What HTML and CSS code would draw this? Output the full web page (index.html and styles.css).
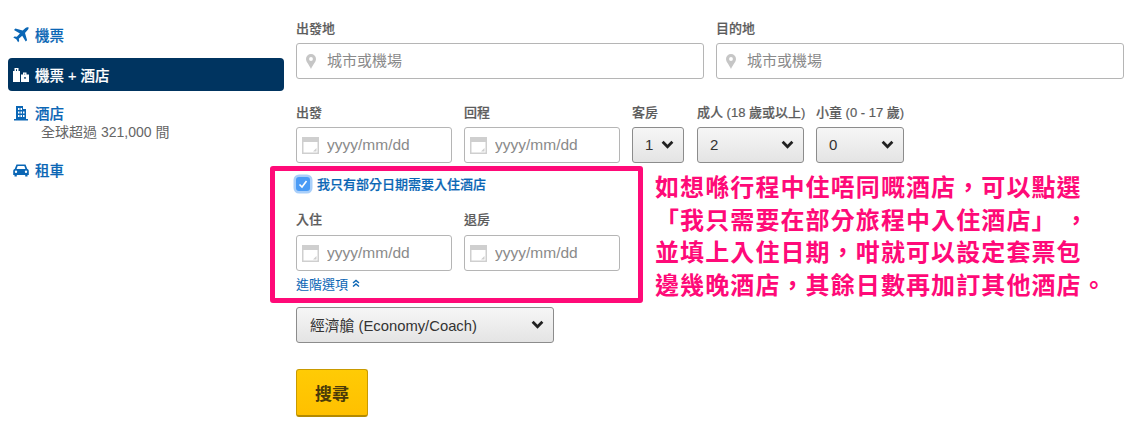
FILE: index.html
```html
<!DOCTYPE html>
<html lang="zh-Hant">
<head>
    <meta charset="UTF-8">
    <title>機票 + 酒店</title>
    <link rel="stylesheet" href="styles.css">
</head>
<body>
    <div class="page">
        <nav class="sidebar">
            <a class="nav-item">
                <svg class="nav-icon" viewBox="0 0 16 16"><path d="M15.6.6c-.8-.7-2.200-.4-3.100.4L9.700 3.600 2.400 1.500 1 2.900l5.900 3.500-3.100 3.400-2.300-.4L.3 10.500l3 1.700 1.800 3.100 1.100-1.200-.4-2.300 3.400-3.100 3.500 5.900 1.400-1.400-2.100-7.300 2.600-2.800c.9-.9 1.200-2.300 1-2.500z"/></svg>
                <span>機票</span>
            </a>
            <a class="nav-item active">
                <svg class="nav-icon" viewBox="0 0 16 16"><path fill-rule="evenodd" d="M0 4h1.500V1h4v3H7v11H0zM3 2.300V4h1V2.300z"/><path fill-rule="evenodd" d="M8 7.500h2V5.500h3.500v2H16V15H8zM11.300 6.700v.8h.9v-.8z"/><rect x="11.300" y="10" width="1.400" height="1.800" fill="#003460"/></svg>
                <span>機票 + 酒店</span>
            </a>
            <a class="nav-item has-sub">
                <svg class="nav-icon" viewBox="0 0 16 16"><path fill-rule="evenodd" d="M3 1h7v3h3v10h2v1.500H1V14h2zM5 3v2h1.500V3zm2.500 0v2H9V3zM5 6.500v2h1.500v-2zm2.500 0v2H9v-2zm2.500 0v2h1.500v-2zM5 10v2h1.500v-2zm2.500 0v2H9v-2zm2.500 0v2h1.500v-2z"/></svg>
                <span>酒店</span>
            </a>
            <div class="nav-sub">全球超過 321,000 間</div>
            <a class="nav-item">
                <svg class="nav-icon" viewBox="0 0 16 16"><path fill-rule="evenodd" d="M3.500 2.500h9L14.300 7c1 .4 1.500 1.200 1.500 2.200V13h-1.300v1.500h-2.300V13H3.800v1.500H1.500V13H.2V9.200C.2 8.200.7 7.400 1.700 7zM4.700 4 3.600 6.900h8.800L11.300 4zM3 8.600a1.200 1.200 0 1 0 0 2.400 1.200 1.200 0 0 0 0-2.400zm10 0a1.200 1.200 0 1 0 0 2.400 1.200 1.200 0 0 0 0-2.400z"/></svg>
                <span>租車</span>
            </a>
        </nav>

        <main class="form">
            <div class="row row-places">
                <label class="field grow">
                    <span class="field-label">出發地</span>
                    <span class="input-wrap">
                        <svg class="pin-icon" viewBox="0 0 12 18"><path fill-rule="evenodd" d="M6 0a6 6 0 0 1 6 6c0 3.500-3.500 6.500-6 12C3.500 12.500 0 9.500 0 6a6 6 0 0 1 6-6zm0 3.700a2.300 2.300 0 1 0 0 4.600 2.300 2.300 0 0 0 0-4.600z"/></svg>
                        <input class="text-input" placeholder="城市或機場">
                    </span>
                </label>
                <label class="field grow">
                    <span class="field-label">目的地</span>
                    <span class="input-wrap">
                        <svg class="pin-icon" viewBox="0 0 12 18"><path fill-rule="evenodd" d="M6 0a6 6 0 0 1 6 6c0 3.500-3.500 6.500-6 12C3.500 12.500 0 9.500 0 6a6 6 0 0 1 6-6zm0 3.700a2.300 2.300 0 1 0 0 4.600 2.300 2.300 0 0 0 0-4.600z"/></svg>
                        <input class="text-input" placeholder="城市或機場">
                    </span>
                </label>
            </div>

            <div class="row row-dates">
                <label class="field date">
                    <span class="field-label">出發</span>
                    <span class="input-wrap">
                        <svg class="cal-icon" viewBox="0 0 17 17"><path fill-rule="evenodd" d="M0 0h17v17H0zM1.500 5v10.500h14V5z"/><path d="M14.500 11v3.500H11z"/></svg>
                        <input class="text-input" placeholder="yyyy/mm/dd">
                    </span>
                </label>
                <label class="field date">
                    <span class="field-label">回程</span>
                    <span class="input-wrap">
                        <svg class="cal-icon" viewBox="0 0 17 17"><path fill-rule="evenodd" d="M0 0h17v17H0zM1.500 5v10.500h14V5z"/><path d="M14.500 11v3.500H11z"/></svg>
                        <input class="text-input" placeholder="yyyy/mm/dd">
                    </span>
                </label>
                <div class="field rooms">
                    <span class="field-label">客房</span>
                    <div class="select-box"><span>1</span><svg class="chevron" viewBox="0 0 12 8"><path d="M1.500 1.500 6 6l4.500-4.500"/></svg></div>
                </div>
                <div class="field adults">
                    <span class="field-label">成人 (18 歲或以上)</span>
                    <div class="select-box"><span>2</span><svg class="chevron" viewBox="0 0 12 8"><path d="M1.500 1.500 6 6l4.500-4.500"/></svg></div>
                </div>
                <div class="field kids">
                    <span class="field-label">小童 (0 - 17 歲)</span>
                    <div class="select-box"><span>0</span><svg class="chevron" viewBox="0 0 12 8"><path d="M1.500 1.500 6 6l4.500-4.500"/></svg></div>
                </div>
            </div>

            <div class="partial-check">
                <span class="checkbox"><svg viewBox="0 0 10 10"><path d="M1.500 5.500 4 8l4.500-6"/></svg></span>
                <span class="check-text">我只有部分日期需要入住酒店</span>
            </div>

            <div class="row row-stay">
                <label class="field date">
                    <span class="field-label">入住</span>
                    <span class="input-wrap">
                        <svg class="cal-icon" viewBox="0 0 17 17"><path fill-rule="evenodd" d="M0 0h17v17H0zM1.500 5v10.500h14V5z"/><path d="M14.500 11v3.500H11z"/></svg>
                        <input class="text-input" placeholder="yyyy/mm/dd">
                    </span>
                </label>
                <label class="field date">
                    <span class="field-label">退房</span>
                    <span class="input-wrap">
                        <svg class="cal-icon" viewBox="0 0 17 17"><path fill-rule="evenodd" d="M0 0h17v17H0zM1.500 5v10.500h14V5z"/><path d="M14.500 11v3.500H11z"/></svg>
                        <input class="text-input" placeholder="yyyy/mm/dd">
                    </span>
                </label>
            </div>

            <a class="advanced">進階選項 <svg viewBox="0 0 8 9"><path d="M1 4 4 1.500 7 4M1 7.500 4 5l3 2.500"/></svg></a>

            <div class="select-box cabin"><span>經濟艙 (Economy/Coach)</span><svg class="chevron" viewBox="0 0 12 8"><path d="M1.500 1.500 6 6l4.500-4.500"/></svg></div>

            <button class="search-btn">搜尋</button>
        </main>
    </div>

    <div class="note-box"></div>
    <p class="note-text">如想喺行程中住唔同嘅酒店，可以點選<br>「我只需要在部分旅程中入住酒店」 ，<br>並填上入住日期，咁就可以設定套票包<br>邊幾晚酒店，其餘日數再加訂其他酒店。</p>
</body>
</html>
```

FILE: styles.css
```css
* {
    box-sizing: border-box;
}

body {
    margin: 0;
    height: 429px;
    overflow: hidden;
    position: relative;
    background-color: white;
    font-family: "Liberation Sans", "Noto Sans CJK TC", sans-serif;
    font-size: 14px;
    color: #333;
}

.page {
    display: flex;
    padding-left: 8px;
}

/* left menu */
.sidebar {
    width: 276px;
    margin-right: 12px;
    padding-top: 24px;
}

.nav-item {
    display: flex;
    align-items: center;
    gap: 6px;
    height: 21px;
    padding-left: 5px;
    font-size: 14.500px;
    font-weight: 500;
    -webkit-text-stroke: 0.2px currentColor;
    color: #0a66b5;
    margin-bottom: 13px;
}

.nav-icon {
    width: 16px;
    height: 16px;
    fill: currentColor;
    flex: none;
}

.nav-item.active {
    height: 33px;
    background-color: #003460;
    color: white;
    border-radius: 4px;
    margin-bottom: 11px;
}

.nav-item.has-sub {
    margin-bottom: 0;
}

.nav-sub {
    padding-left: 33px;
    font-size: 14px;
    line-height: 19px;
    color: #666;
    margin-bottom: 17px;
}

/* search form */
.form {
    width: 828px;
    padding-top: 21px;
}

.row {
    display: flex;
    gap: 12px;
}

.row-places {
    margin-bottom: 26px;
}

.field {
    display: flex;
    flex-direction: column;
}

.grow {
    flex: 1;
}

.date {
    width: 156px;
}

.rooms {
    width: 52px;
    margin-right: 1px;
}

.adults {
    width: 107px;
}

.kids {
    width: 88px;
}

.field-label {
    font-size: 13px;
    line-height: 16px;
    height: 16px;
    margin-bottom: 6px;
    font-weight: 500;
    -webkit-text-stroke: 0.2px currentColor;
    color: #5c5c5c;
    white-space: nowrap;
}

.row-stay .field-label {
    margin-bottom: 7px;
}

.input-wrap {
    position: relative;
    display: block;
}

.text-input {
    display: block;
    width: 100%;
    height: 36px;
    padding: 0 8px 2px 30px;
    border: 1px solid #b5b5b5;
    border-radius: 3px;
    font-family: inherit;
    font-size: 15px;
    color: #333;
    background-color: white;
}

.date .text-input {
    padding-bottom: 0;
    font-size: 15.500px;
}

.text-input::placeholder {
    color: #8a8a8a;
    opacity: 1;
}

.pin-icon {
    position: absolute;
    left: 10px;
    top: 11px;
    width: 10px;
    height: 15px;
    fill: #c6c6c6;
}

.cal-icon {
    position: absolute;
    left: 6px;
    top: 10px;
    width: 17px;
    height: 17px;
    fill: #cfcfcf;
}

.select-box {
    display: flex;
    align-items: center;
    justify-content: space-between;
    height: 36px;
    padding: 0 9px 1px 12px;
    border: 1px solid #8c8c8c;
    border-radius: 3px;
    background: linear-gradient(#f6f6f6, #e4e4e4);
    font-size: 15px;
    color: #333;
}

.chevron {
    width: 13px;
    height: 9px;
    fill: none;
    stroke: #222;
    stroke-width: 2.6;
}

.partial-check {
    display: flex;
    align-items: center;
    gap: 7px;
    height: 20px;
    margin-top: 11px;
    margin-bottom: 18px;
    font-size: 13px;
    font-weight: 500;
    -webkit-text-stroke: 0.2px currentColor;
    color: #0a66b5;
}

.check-text {
    padding-bottom: 2px;
}

.checkbox {
    width: 14px;
    height: 14px;
    border-radius: 3px;
    background-color: #4a9bf5;
    box-shadow: 0 0 0 2.500px #a9cffa;
    display: flex;
    align-items: center;
    justify-content: center;
}

.checkbox svg {
    width: 10px;
    height: 10px;
    fill: none;
    stroke: white;
    stroke-width: 1.600;
}

.row-stay {
    margin-bottom: 4px;
}

.advanced {
    display: flex;
    align-items: center;
    gap: 4px;
    height: 17px;
    font-size: 13px;
    color: #0a66b5;
    margin-bottom: 15px;
}

.advanced svg {
    width: 8px;
    height: 9px;
    fill: none;
    stroke: currentColor;
    stroke-width: 1.500;
}

.cabin {
    width: 258px;
    height: 36px;
    padding-left: 13px;
    padding-bottom: 2px;
    margin-bottom: 26px;
    font-size: 14.800px;
}

.search-btn {
    display: block;
    width: 72px;
    height: 48px;
    border: 1px solid #c99a00;
    border-bottom: 2px solid #b48a00;
    border-radius: 3px;
    background: linear-gradient(#ffcb05, #ffc000);
    font-family: inherit;
    font-size: 17px;
    font-weight: bold;
    color: #4a3a08;
}

/* annotation laid over the screenshot */
.note-box {
    position: absolute;
    left: 270px;
    top: 166px;
    width: 373px;
    height: 137px;
    border: 5px solid #ff0a78;
    border-radius: 3px;
}

.note-text {
    position: absolute;
    left: 655px;
    top: 172px;
    margin: 0;
    font-size: 24px;
    line-height: 32.700px;
    letter-spacing: 1.100px;
    font-weight: bold;
    color: #ff0a78;
    white-space: nowrap;
}
```
